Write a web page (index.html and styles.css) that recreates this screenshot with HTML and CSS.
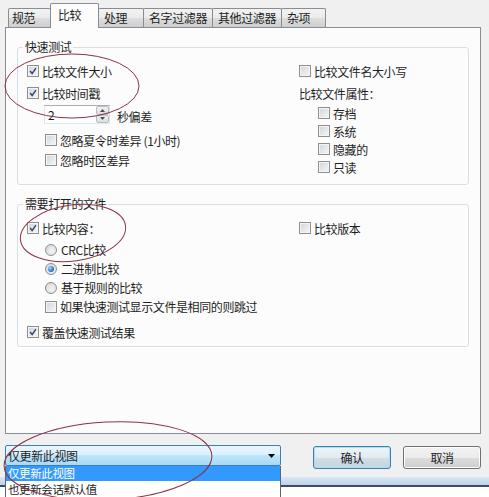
FILE: index.html
```html
<!DOCTYPE html>
<html lang="zh-CN">
<head>
    <meta charset="UTF-8">
    <title>比较</title>
    <link rel="stylesheet" href="styles.css">
</head>
<body>
<div class="tab-strip">
    <span class="tab tab-spec">规范</span>
    <span class="tab tab-active">比较</span>
    <span class="tab tab-handle">处理</span>
    <span class="tab tab-wide">名字过滤器</span>
    <span class="tab tab-wide">其他过滤器</span>
    <span class="tab tab-misc">杂项</span>
</div>

<div class="panel">
    <fieldset class="group group-quick">
        <legend>快速测试</legend>
        <div class="group-cols">
            <div class="col-left">
                <label class="opt"><span class="box checked"><svg viewBox="0 0 12 12"><polyline points="2.5,6 5,9 9.5,2.5"/></svg></span>比较文件大小</label>
                <label class="opt gap-2"><span class="box checked"><svg viewBox="0 0 12 12"><polyline points="2.5,6 5,9 9.5,2.5"/></svg></span>比较时间戳</label>
                <div class="spin-row">
                    <div class="spin">
                        <span class="spin-value">2</span>
                        <span class="spin-btns">
                            <span class="spin-btn"><svg viewBox="0 0 7 4"><polygon points="0,4 3.5,0 7,4"/></svg></span>
                            <span class="spin-btn"><svg viewBox="0 0 7 4"><polygon points="0,0 7,0 3.5,4"/></svg></span>
                        </span>
                    </div>
                    <span class="spin-label">秒偏差</span>
                </div>
                <label class="opt sub gap-6"><span class="box"></span>忽略夏令时差异 (1小时)</label>
                <label class="opt sub"><span class="box"></span>忽略时区差异</label>
            </div>
            <div class="col-right">
                <label class="opt"><span class="box"></span>比较文件名大小写</label>
                <div class="opt gap-2">比较文件属性：</div>
                <div class="attr-list">
                    <label class="opt attr"><span class="box"></span>存档</label>
                    <label class="opt attr"><span class="box"></span>系统</label>
                    <label class="opt attr"><span class="box"></span>隐藏的</label>
                    <label class="opt attr"><span class="box"></span>只读</label>
                </div>
            </div>
        </div>
    </fieldset>

    <fieldset class="group group-open">
        <legend>需要打开的文件</legend>
        <div class="group-cols">
            <div class="col-left">
                <label class="opt"><span class="box checked"><svg viewBox="0 0 12 12"><polyline points="2.5,6 5,9 9.5,2.5"/></svg></span>比较内容：</label>
                <label class="opt sub row-19 gap-2"><span class="radio"></span>CRC比较</label>
                <label class="opt sub row-19"><span class="radio selected"></span>二进制比较</label>
                <label class="opt sub row-19"><span class="radio"></span>基于规则的比较</label>
                <label class="opt sub row-19"><span class="box"></span>如果快速测试显示文件是相同的则跳过</label>
                <label class="opt gap-6"><span class="box checked"><svg viewBox="0 0 12 12"><polyline points="2.5,6 5,9 9.5,2.5"/></svg></span>覆盖快速测试结果</label>
            </div>
            <div class="col-right">
                <label class="opt"><span class="box"></span>比较版本</label>
            </div>
        </div>
    </fieldset>
</div>

<div class="actions">
    <div class="combo">
        <span>仅更新此视图</span>
        <svg class="combo-arrow" viewBox="0 0 7 4"><polygon points="0,0 7,0 3.5,4"/></svg>
    </div>
    <ul class="combo-list">
        <li class="picked">仅更新此视图</li>
        <li>也更新会话默认值</li>
    </ul>
    <div class="buttons">
        <button class="btn btn-default">确认</button>
        <button class="btn">取消</button>
    </div>
</div>

<div class="frame"></div>

<svg class="marks" viewBox="0 0 489 497">
    <ellipse cx="72" cy="86" rx="67" ry="32"/>
    <ellipse cx="73" cy="233" rx="53" ry="28" transform="rotate(-8 73 233)"/>
    <ellipse cx="108" cy="461" rx="104" ry="39" transform="rotate(-3 108 461)"/>
</svg>
</body>
</html>
```

FILE: styles.css
```css
body {
    margin: 0;
    width: 489px;
    height: 497px;
    overflow: hidden;
    position: relative;
    background-color: #f0f0f0;
    font-family: "Noto Sans CJK SC", "Liberation Sans", sans-serif;
    font-size: 12px;
    letter-spacing: -0.4px;
    color: #1e1e1e;
    background-image: linear-gradient(#fff, #fff);
    background-repeat: no-repeat;
    background-position: 0 487px;
    background-size: 100% 10px;
}

/* tabs */
.tab-strip {
    display: flex;
    align-items: flex-end;
    height: 27px;
    padding-left: 8px;
}
.tab {
    box-sizing: border-box;
    height: 19px;
    line-height: 17px;
    padding-left: 5px;
    margin-left: -1px;
    border: 1px solid #898c95;
    border-bottom: none;
    border-radius: 2px 2px 0 0;
    background: linear-gradient(#f2f2f2, #ebebeb 50%, #dddddd 50%, #cfcfcf);
    white-space: nowrap;
}
.tab-spec { width: 43px; margin-left: 0; padding-left: 3px; }
.tab-active {
    width: 49px;
    height: 25px;
    margin-bottom: -1px;
    padding-left: 7px;
    line-height: 22px;
    background: #fcfcfc;
    position: relative;
    z-index: 1;
}
.tab-handle { width: 46px; }
.tab-wide { width: 70px; }
.tab-misc { width: 45px; }

.panel {
    box-sizing: border-box;
    height: 407px;
    margin: 0 8px 0 5px;
    padding: 0 11px;
    border: 1px solid #898c95;
    background-color: #fcfcfc;
    overflow: hidden;
}

/* group boxes */
.group {
    box-sizing: border-box;
    min-width: 0;
    margin: 12px 0 0 0;
    padding: 7px 10px 0 9px;
    border: 1px solid #d5dfe5;
    border-radius: 3px;
    box-shadow: 1px 1px 0 #fff;
}
.group legend {
    padding: 0 2px;
    margin-left: -4px;
    line-height: 14px;
}
.group-quick { height: 145px; }
.group-open { height: 150px; }

.group-cols { display: flex; }
.col-left {
    width: 272px;
    display: flex;
    flex-direction: column;
}
.col-right {
    display: flex;
    flex-direction: column;
}

.opt {
    display: flex;
    align-items: center;
    height: 20px;
    white-space: nowrap;
}
.opt.sub { margin-left: 18px; }
.opt.row-19 { height: 19px; }
.opt.attr { height: 18px; margin-left: 19px; }
.gap-2 { margin-top: 2px; }
.gap-6 { margin-top: 6px; }
.attr-list { margin-top: 1px; }

/* checkbox + radio */
.box {
    box-sizing: border-box;
    width: 12px;
    height: 12px;
    margin-right: 3px;
    border: 1px solid #8e8f8f;
    background: linear-gradient(135deg, #d2d4d8, #f7f7f7);
    box-shadow: inset 0 0 0 1px #f4f4f4;
    flex-shrink: 0;
}
.box svg {
    display: block;
    width: 10px;
    height: 10px;
}
.box polyline {
    fill: none;
    stroke: #34456e;
    stroke-width: 1.7;
}
.radio {
    box-sizing: border-box;
    width: 12px;
    height: 12px;
    margin-right: 4px;
    border: 1px solid #8e8f8f;
    border-radius: 50%;
    background: radial-gradient(circle at 60% 60%, #f4f4f4, #d4d4d4);
    display: flex;
    align-items: center;
    justify-content: center;
    flex-shrink: 0;
}
.radio.selected::after {
    content: "";
    width: 6px;
    height: 6px;
    border-radius: 50%;
    background: radial-gradient(circle at 35% 35%, #9fdcff, #2a78c8 60%, #144a8a);
}

/* spin box */
.spin-row {
    display: flex;
    align-items: flex-end;
    margin-top: 2px;
    margin-left: 17px;
}
.spin {
    box-sizing: border-box;
    width: 66px;
    height: 19px;
    display: flex;
    justify-content: space-between;
    border: 1px solid;
    border-color: #abadb3 #dbdfe6 #e3e9ef #e2e3ea;
    background-color: #fff;
}
.spin-value {
    padding-left: 3px;
    line-height: 17px;
}
.spin-btns {
    width: 13px;
    display: flex;
    flex-direction: column;
}
.spin-btn {
    flex: 1;
    display: flex;
    align-items: center;
    justify-content: center;
    border: 1px solid #b8bcc4;
    border-radius: 2px;
    background: linear-gradient(#f3f3f3, #dcdcdc);
}
.spin-btn svg { width: 5px; height: 3px; }
.spin-btn polygon { fill: #4d4d4d; }
.spin-label {
    margin-left: 7px;
    line-height: 14px;
}

/* bottom row */
.actions {
    position: relative;
    display: flex;
    height: 24px;
    margin-top: 11px;
    padding: 0 8px 0 5px;
}
.combo {
    box-sizing: border-box;
    width: 276px;
    height: 21px;
    padding: 0 5px 0 2px;
    display: flex;
    align-items: center;
    justify-content: space-between;
    border: 1px solid #3c7fb1;
    border-radius: 2px;
    background: linear-gradient(#eaf6fd, #d9f0fc 50%, #bee6fd 50%, #a7d9f5);
}
.combo-arrow { width: 7px; height: 4px; }
.combo-arrow polygon { fill: #000; }
.combo-list {
    position: absolute;
    z-index: 2;
    left: 5px;
    top: 21px;
    width: 276px;
    box-sizing: border-box;
    margin: 0;
    padding: 0;
    list-style: none;
    border: 1px solid #646464;
    border-top: none;
    background-color: #fff;
}
.combo-list li {
    height: 16px;
    line-height: 16px;
    font-size: 11.5px;
    padding-left: 2px;
    overflow: hidden;
}
.combo-list li.picked {
    height: 15px;
    line-height: 15px;
    background-color: #3399ff;
    color: #fff;
}
.buttons {
    margin-left: auto;
    display: flex;
    gap: 12px;
}
.btn {
    box-sizing: border-box;
    width: 78px;
    height: 23px;
    margin-top: 1px;
    padding: 0;
    font-family: inherit;
    font-size: 12px;
    letter-spacing: inherit;
    color: #1e1e1e;
    border: 1px solid #707070;
    border-radius: 3px;
    background: linear-gradient(#f2f2f2, #ebebeb 50%, #dddddd 50%, #cfcfcf);
    box-shadow: inset 0 0 0 1px #fcfcfc;
}
.btn-default {
    border-color: #3c7fb1;
    background: linear-gradient(#eef3f7, #e3ebf1 50%, #d3dee7 50%, #c6d4df);
    box-shadow: inset 0 0 0 1px #a6e1f5;
}

.frame {
    height: 8px;
    margin-top: 8px;
    background: linear-gradient(#d9e7f5, #bdd3ea);
    border-bottom: 2px solid #3b4d61;
}

.marks {
    position: absolute;
    left: 0;
    top: 0;
    width: 489px;
    height: 497px;
    pointer-events: none;
    z-index: 5;
}
.marks ellipse {
    fill: none;
    stroke: #8a3344;
    stroke-width: 1;
}
```
